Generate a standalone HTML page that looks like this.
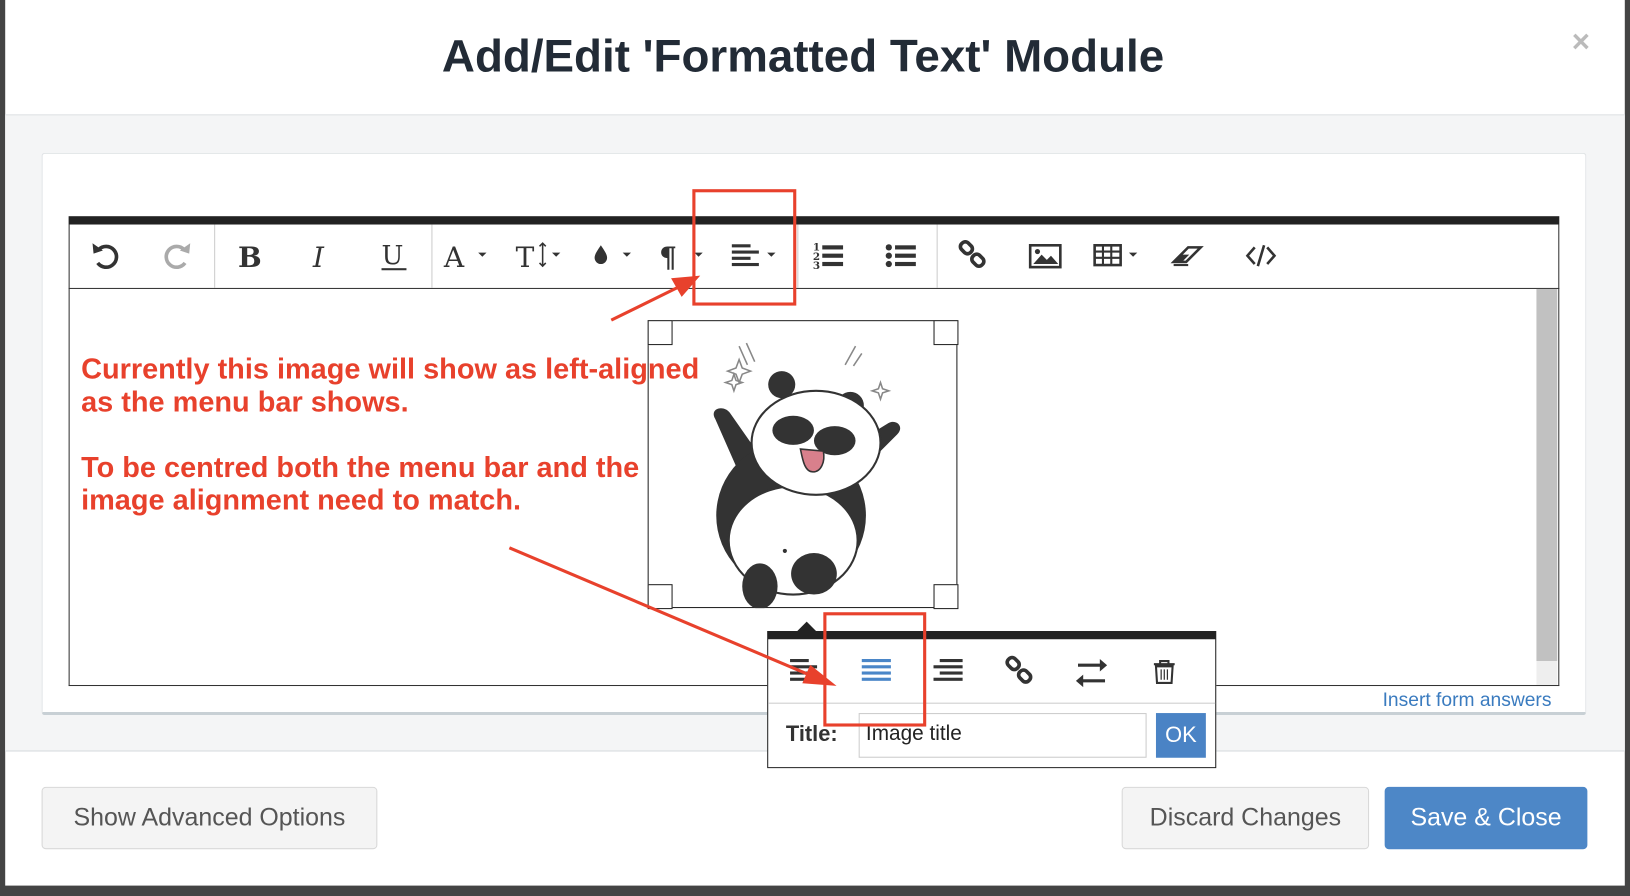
<!DOCTYPE html>
<html><head><meta charset="utf-8"><style>
html,body{margin:0;padding:0;width:1630px;height:896px;overflow:hidden;background:#3a3a3a;}
#w{position:absolute;left:0;top:0;width:1568px;height:862px;transform:scale(1.03954,1.03944);transform-origin:0 0;font-family:"Liberation Sans",sans-serif;}
.a{position:absolute;box-sizing:border-box;}
.red{color:#e8412c;font-weight:bold;font-size:27.8px;line-height:31.5px;}
.btn{position:absolute;border:1px solid #d8d8d8;border-radius:4px;background:#f4f4f4;color:#555;font-size:24px;display:flex;align-items:center;justify-content:center;box-sizing:border-box;}
</style></head><body><div id="w">
<div class="a" style="left:0;top:0;width:1568px;height:862px;background:#444"></div>
<div class="a" style="left:5px;top:0;width:1558px;height:852px;background:#fff"></div>
<div class="a" style="left:5px;top:110px;width:1558px;height:613px;background:#f4f5f6;border-top:1px solid #dde1e4;border-bottom:1px solid #d5dadd"></div>
<div class="a" style="left:5px;top:22px;width:1535px;text-align:center;font-size:44px;font-weight:bold;color:#222b36;line-height:66px">Add/Edit 'Formatted Text' Module</div>
<div class="a" style="left:1512px;top:24px;font-size:30px;color:#bbb;font-weight:bold">×</div>
<div class="a" style="left:40px;top:147px;width:1486px;height:541px;background:#fff;border:1px solid #e1e4e6;border-bottom:3px solid #c8d0d5;border-radius:3px"></div>
<div class="a" style="left:66px;top:208px;width:1434px;height:8px;background:#222"></div>
<div class="a" style="left:66px;top:216px;width:1434px;height:444px;border:1px solid #333;border-top:none"></div>
<div class="a" style="left:66px;top:277px;width:1434px;height:1px;background:#333"></div>
<div class="a" style="left:206px;top:216px;width:1px;height:61px;background:#ccc"></div>
<div class="a" style="left:415px;top:216px;width:1px;height:61px;background:#ccc"></div>
<div class="a" style="left:767px;top:216px;width:1px;height:61px;background:#ccc"></div>
<div class="a" style="left:901px;top:216px;width:1px;height:61px;background:#ccc"></div>
<div class="a" style="left:1478px;top:278px;width:20px;height:358px;background:#c1c1c1"></div>
<div class="a" style="left:1478px;top:636px;width:20px;height:23px;background:#eee"></div>
<svg class="a" style="left:66px;top:216px" width="1434" height="61" viewBox="66 216 1434 61" font-family="DejaVu Serif,Liberation Serif,serif" fill="#333">
<path d="M95 240 a10 10 0 1 1 -1 13" stroke="#333" stroke-width="3.5" fill="none"/><path d="M89 234 l1 10 9 -3z"/>
<path d="M177 240 a10 10 0 1 0 1 13" stroke="#aaa" stroke-width="3.5" fill="none"/><path d="M183 234 l-1 10 -9 -3z" fill="#aaa"/>
<text x="229" y="257" font-size="27" font-weight="bold">B</text>
<text x="301" y="257" font-size="27" font-style="italic">I</text>
<text x="367" y="254" font-size="25">U</text><rect x="367" y="258" width="24" height="2"/>
<text x="427" y="257" font-size="27">A</text><path d="M460 243h8l-4 4z"/>
<text x="496" y="257" font-size="27">T</text><path d="M522 234v22M519 237l3-3 3 3M519 253l3 3 3-3" stroke="#333" stroke-width="1.5" fill="none"/><path d="M531 243h8l-4 4z"/>
<path d="M578 236c-4 6-6 9-6 12a6 6 0 0 0 12 0c0-3-2-6-6-12z"/><path d="M599 243h8l-4 4z"/>
<text x="634" y="257" font-size="27" font-weight="bold">¶</text><path d="M668 243h8l-4 4z"/>
<rect x="704" y="235" width="18" height="3"/><rect x="704" y="241" width="26" height="3"/><rect x="704" y="247" width="18" height="3"/><rect x="704" y="253" width="26" height="3"/><path d="M738 243h8l-4 4z"/>
<text x="782" y="241" font-size="10" font-weight="bold">1</text><text x="782" y="250" font-size="10" font-weight="bold">2</text><text x="782" y="259" font-size="10" font-weight="bold">3</text>
<rect x="791" y="236" width="20" height="4"/><rect x="791" y="244" width="20" height="4"/><rect x="791" y="252" width="20" height="4"/>
<circle cx="855" cy="238" r="3"/><circle cx="855" cy="246" r="3"/><circle cx="855" cy="254" r="3"/><rect x="861" y="236" width="20" height="4"/><rect x="861" y="244" width="20" height="4"/><rect x="861" y="252" width="20" height="4"/>
<g stroke="#333" stroke-width="3.5" fill="none"><rect x="924" y="234" width="12" height="9" rx="4" transform="rotate(45 930 238)"/><rect x="935" y="246" width="12" height="9" rx="4" transform="rotate(45 941 250)"/></g>
<rect x="991" y="236" width="29" height="21" fill="none" stroke="#333" stroke-width="2.5"/><path d="M994 254l8-9 5 5 4-4 7 8z"/><circle cx="998" cy="242" r="2.5"/>
<rect x="1053" y="236" width="25" height="19" fill="none" stroke="#333" stroke-width="2.5"/><path d="M1053 242h25M1053 248h25M1061 236v19M1069 236v19" stroke="#333" stroke-width="2"/><path d="M1086 243h8l-4 4z"/>
<path d="M1129 252l14-14 12 0-14 14z" fill="none" stroke="#333" stroke-width="2.5"/><path d="M1129 252l7-7 8 0-7 7z"/><rect x="1129" y="254" width="14" height="2"/>
<path d="M1207 238l-7 8 7 8M1219 238l7 8-7 8M1216 236l-6 20" stroke="#333" stroke-width="2.5" fill="none"/>
</svg>
<div class="a" style="left:623px;top:308px;width:298px;height:277px;border:1px solid #222;background:#fff"></div>
<svg class="a" style="left:623px;top:308px" width="298" height="277" viewBox="0 0 298 277">
<g stroke="#888" fill="none" stroke-width="1.5"><path d="M88 25l8 18M95 22l8 18M200 25l-10 18M206 32l-8 12"/><path d="M88 38l3 8 8 3-8 3-3 8-3-8-8-3 8-3z"/><path d="M83 52l2 6 6 2-6 2-2 6-2-6-6-2 6-2z"/><path d="M224 60l2 6 6 2-6 2-2 6-2-6-6-2 6-2z"/></g>
<path d="M65 95c-6-10 8-14 14-6l35 50-12 40z" fill="#333"/>
<path d="M230 100c8-6 18 2 10 10l-55 55-12-30z" fill="#333"/>
<ellipse cx="138" cy="188" rx="72" ry="72" fill="#333"/>
<ellipse cx="140" cy="212" rx="62" ry="52" fill="#fff" stroke="#333" stroke-width="2"/>
<ellipse cx="108" cy="256" rx="17" ry="22" fill="#333"/>
<ellipse cx="160" cy="244" rx="22" ry="20" fill="#333"/>
<circle cx="129" cy="62" r="13" fill="#333"/><circle cx="195" cy="82" r="13" fill="#333"/>
<ellipse cx="162" cy="118" rx="62" ry="50" fill="#fff" stroke="#333" stroke-width="2"/>
<ellipse cx="140" cy="106" rx="20" ry="14" fill="#333"/><ellipse cx="180" cy="116" rx="20" ry="14" fill="#333"/>
<path d="M147 124c2 10 4 22 12 22s12-10 10-20z" fill="#d8808c" stroke="#333" stroke-width="1.5"/>
<circle cx="132" cy="222" r="2" fill="#333"/>
</svg>
<div class="a" style="left:623px;top:308px;width:24px;height:24px;border:1px solid #222;background:#fff"></div>
<div class="a" style="left:898px;top:308px;width:24px;height:24px;border:1px solid #222;background:#fff"></div>
<div class="a" style="left:623px;top:562px;width:24px;height:24px;border:1px solid #222;background:#fff"></div>
<div class="a" style="left:898px;top:562px;width:24px;height:24px;border:1px solid #222;background:#fff"></div>
<div class="a red" style="left:78px;top:339px">Currently this image will show as left-aligned<br>as the menu bar shows.<br><br>To be centred both the menu bar and the<br>image alignment need to match.</div>
<div class="a" style="left:1330px;top:662px;font-size:18.5px;color:#3a7bbf">Insert form answers</div>
<div class="a" style="left:738px;top:607px;width:432px;height:132px;background:#fff;border:1px solid #222;border-top:8px solid #222"></div>
<div class="a" style="left:767px;top:598px;width:0;height:0;border-left:9px solid transparent;border-right:9px solid transparent;border-bottom:9px solid #222"></div>
<div class="a" style="left:739px;top:676px;width:430px;height:1px;background:#ccc"></div>
<svg class="a" style="left:738px;top:615px" width="432" height="60" viewBox="738 615 432 60" fill="#333">
<rect x="760" y="634" width="18" height="3"/><rect x="760" y="640" width="26" height="3"/><rect x="760" y="646" width="18" height="3"/><rect x="760" y="652" width="26" height="3"/>
<g fill="#4a86c8"><rect x="829" y="634" width="28" height="3"/><rect x="829" y="640" width="28" height="3"/><rect x="829" y="646" width="28" height="3"/><rect x="829" y="652" width="28" height="3"/></g>
<rect x="904" y="634" width="22" height="3"/><rect x="898" y="640" width="28" height="3"/><rect x="904" y="646" width="22" height="3"/><rect x="898" y="652" width="28" height="3"/>
<g stroke="#333" stroke-width="3.5" fill="none"><rect x="969" y="634" width="12" height="9" rx="4" transform="rotate(45 975 638)"/><rect x="980" y="646" width="12" height="9" rx="4" transform="rotate(45 986 650)"/></g>
<path d="M1037 640h24M1063 655h-24" stroke="#333" stroke-width="3"/><path d="M1058 634l7 6-7 6zM1042 649l-7 6 7 6z"/>
<path d="M1110 639h20M1116 639v-3h8v3M1112 641h16l-1 16h-14z" stroke="#333" stroke-width="2" fill="none"/><path d="M1117 644v10M1120 644v10M1123 644v10" stroke="#333" stroke-width="1.2"/>
</svg>
<div class="a" style="left:756px;top:695px;font-size:21px;font-weight:bold;color:#333">Title:</div>
<div class="a" style="left:826px;top:686px;width:277px;height:43px;border:1px solid #ccc;font-size:20px;color:#222;padding:8px 6px">Image title</div>
<div class="a" style="left:1112px;top:686px;width:48px;height:43px;background:#4a83c5;color:#fff;font-size:21px;display:flex;align-items:center;justify-content:center">OK</div>
<div class="a" style="left:666px;top:182px;width:100px;height:112px;border:3px solid #e8412c"></div>
<div class="a" style="left:792px;top:589px;width:99px;height:110px;border:3px solid #e8412c"></div>
<svg class="a" style="left:0;top:0" width="1568" height="862"><g stroke="#e8412c" stroke-width="3" fill="#e8412c"><line x1="588" y1="308" x2="655" y2="275"/><path d="M670 267l-22 2 8 14z"/><line x1="490" y1="527" x2="785" y2="652"/><path d="M800 658l-20-16-6 14z"/></g></svg>
<div class="btn" style="left:40px;top:757px;width:323px;height:60px">Show Advanced Options</div>
<div class="btn" style="left:1079px;top:757px;width:238px;height:60px">Discard Changes</div>
<div class="btn" style="left:1332px;top:757px;width:195px;height:60px;background:#4d87c7;border-color:#4d87c7;color:#fff">Save &amp; Close</div>
</div></body></html>
